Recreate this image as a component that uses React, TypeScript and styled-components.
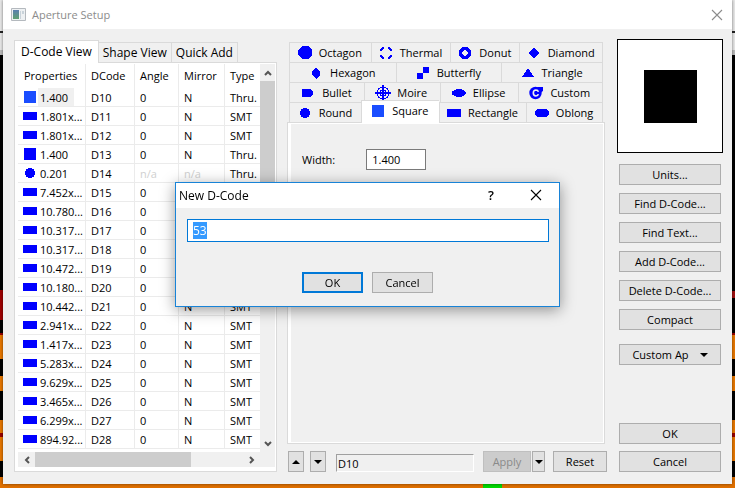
import React, { useEffect, useRef } from "react";
import styled, { createGlobalStyle, css } from "styled-components";

const BLUE = "#0000ff";
const BLUE_SELECTED = "#1a4dff";
const LINE = "#dadada";

const GlobalStyle = createGlobalStyle`
  * { box-sizing: border-box; }
  body { margin: 0; }
  body, button, input { font: 11px/15px "Open Sans", "Noto Sans", sans-serif; color: #000; }
`;

/* ---------- board behind the windows ---------- */

const Board = styled.div`
  min-height: 100vh;
  padding: 0 3px 4px;
  background:
    linear-gradient(#00d800, #00d800) 67.5% 100% / 19px 4px no-repeat,
    linear-gradient(#a00000, #a00000) 0 290px / 3px 30px no-repeat,
    linear-gradient(#a01010, #a01010) 100% 291px / 3px 7px no-repeat,
    linear-gradient(
      #e8e8e8 0 31px, #222 31px 33px, #e8e8e8 33px 50px, #bbb 50px 55px,
      #000 55px 333px, #900 333px 335px, #e87800 335px 359px,
      #000 359px 376px, #e87800 376px 391px, #000 391px 420px,
      #e87800 420px 433px, #900 433px 437px, #e87800 437px 461px,
      #000 461px 477px, #e07000 477px
    );
`;

const Window = styled.main`
  display: flex;
  flex-direction: column;
  min-height: calc(100vh - 4px);
  background: #f0f0f0;
  box-shadow: 0 0 3px rgba(0, 0, 0, 0.5);
`;

const TitleBar = styled.header`
  display: flex;
  align-items: center;
  gap: 6px;
  height: 29px;
  padding: 0 9px 0 8px;
  background: #fff;
  color: #8c8c8c;
`;

const TitleText = styled.h1`
  flex: 1;
  margin: 0;
  font: inherit;
`;

const CaptionButton = styled.button`
  display: flex;
  padding: 0;
  border: 0;
  background: none;
`;

const Body = styled.div`
  flex: 1;
  display: grid;
  grid-template-columns: 263px minmax(0, 1fr) 106px;
  column-gap: 10px;
  padding: 10px 9px 12px 11px;
`;

/* ---------- buttons ---------- */

const PushButton = styled.button<{ $default?: boolean; $width?: number }>`
  display: flex;
  align-items: center;
  justify-content: center;
  gap: 11px;
  height: 21px;
  padding: 0;
  ${(p) => p.$width && css`width: ${p.$width}px;`}
  border: ${(p) => (p.$default ? "2px solid #0078d7" : "1px solid #adadad")};
  background: #e1e1e1;
  white-space: nowrap;
  &:disabled {
    border-color: #bfbfbf;
    background: #ccc;
    color: #8a8a8a;
  }
`;

/* ---------- left column ---------- */

const Column = styled.section<{ $top: number }>`
  display: flex;
  flex-direction: column;
  min-width: 0;
  padding-top: ${(p) => p.$top}px;
`;

const ViewTabs = styled.div`
  display: flex;
  align-items: flex-end;
`;

const ViewTab = styled.button<{ $active?: boolean }>`
  height: ${(p) => (p.$active ? 23 : 20)}px;
  margin-bottom: ${(p) => (p.$active ? -1 : 0)}px;
  padding: 0 ${(p) => (p.$active ? 6 : 4)}px ${(p) => (p.$active ? 2 : 0)}px;
  border: 1px solid ${LINE};
  border-bottom: 0;
  & + & { border-left: 0; }
  background: ${(p) => (p.$active ? "#fff" : "#f0f0f0")};
  font-size: 12px;
  white-space: nowrap;
  position: relative;
`;

const ListPane = styled.div`
  flex: 1;
  display: grid;
  grid-template-columns: minmax(0, 1fr) 15px;
  grid-template-rows: auto 15px;
  align-content: start;
  padding: 1px 1px 2px 3px;
  border: 1px solid ${LINE};
  background: #fff;
`;

const CodeTable = styled.table`
  width: 100%;
  margin-bottom: 3px;
  table-layout: fixed;
  border-spacing: 0;
`;

const Col = styled.col<{ $w?: number }>`
  ${(p) => p.$w && css`width: ${p.$w}px;`}
`;

const cell = css`
  padding: 0 0 0 5px;
  overflow: hidden;
  white-space: nowrap;
  text-align: left;
  font-weight: normal;
  border-right: 1px solid #ebebeb;
  &:last-child { border-right: 0; }
`;

const HeadCell = styled.th`
  ${cell}
  height: 24px;
  padding-bottom: 1px;
  &:first-child { padding-left: 6px; }
`;

const Cell = styled.td<{ $muted?: boolean }>`
  ${cell}
  height: 19px;
  border-bottom: 1px solid #ebebeb;
  color: ${(p) => (p.$muted ? "#d0d0d0" : "#000")};
  &:first-child { padding-left: 4px; }
`;

const Property = styled.div`
  display: flex;
  align-items: center;
  height: 18px;
`;

const PropertyText = styled.span<{ $selected?: boolean }>`
  height: 18px;
  padding: 2px 6px 0 2px;
  background: ${(p) => (p.$selected ? "#f0f0f0" : "none")};
`;

const ScrollBar = styled.div<{ $vertical?: boolean }>`
  display: flex;
  flex-direction: ${(p) => (p.$vertical ? "column" : "row")};
  background: #f0f0f0;
`;

const ScrollArrow = styled.button`
  display: grid;
  place-items: center;
  flex: 0 0 17px;
  padding: 0;
  border: 0;
  background: none;
`;

const ScrollTrack = styled.div<{ $vertical?: boolean }>`
  flex: 1;
  display: flex;
  flex-direction: ${(p) => (p.$vertical ? "column" : "row")};
`;

const ScrollThumb = styled.div<{ $size: number }>`
  flex: 0 0 ${(p) => p.$size}%;
  background: #cdcdcd;
`;

const ScrollCorner = styled.div`
  background: #f0f0f0;
`;

/* ---------- centre column ---------- */

const ShapeRows = styled.div`
  padding: 0 4px 0 2px;
`;

const ShapeRow = styled.div`
  display: flex;
  height: 20px;
`;

const ShapeTab = styled.button<{ $share: number; $active?: boolean }>`
  flex: ${(p) => p.$share} 1 0;
  display: flex;
  align-items: center;
  justify-content: center;
  gap: 6px;
  padding: 0 2px 0 0;
  border: solid ${LINE};
  border-width: 1px 0 0 1px;
  &:last-child { border-right-width: 1px; }
  background: ${(p) => (p.$active ? "#fff" : "#f0f0f0")};
  ${(p) =>
    p.$active &&
    css`
      margin: -2px 0 -1px;
      padding-bottom: 3px;
      z-index: 1;
    `}
`;

const ShapePane = styled.div`
  flex: 1;
  margin-right: 2px;
  padding: 26px 12px;
  border: 1px solid ${LINE};
  box-shadow: inset 3px 1px #fff, inset -1px -1px #fff;
`;

const Field = styled.label`
  display: flex;
  align-items: center;
  gap: 31px;
  padding-left: 2px;
`;

const WidthInput = styled.input`
  width: 60px;
  height: 21px;
  padding: 0 5px;
  border: 1px solid #7a7a7a;
  background: #fff;
`;

const CommandRow = styled.div`
  display: flex;
  align-items: flex-end;
  gap: 6px;
  margin-top: 7px;
  padding-left: 1px;
`;

const StatusField = styled.input`
  flex: 1;
  min-width: 0;
  height: 18px;
  margin: 0 3px 0 4px;
  padding: 0 1px;
  border: 1px solid;
  border-color: #a0a0a0 #fff #fff #a0a0a0;
  background: #f0f0f0;
`;

const SplitButton = styled.div`
  display: flex;
  gap: 1px;
  margin-right: 2px;
`;

/* ---------- right column ---------- */

const Preview = styled.div`
  display: grid;
  place-items: center;
  height: 114px;
  border: 1px solid #000;
  background: #fff;
`;

const ButtonStack = styled.div`
  flex: 1;
  display: flex;
  flex-direction: column;
  gap: 8px;
  padding: 11px 2px 0;
`;

const MenuButton = styled(PushButton)`
  margin-top: 6px;
`;

const Confirm = styled.div`
  display: grid;
  gap: 7px;
  margin-top: auto;
`;

/* ---------- modal ---------- */

const Overlay = styled.div`
  position: fixed;
  inset: 0;
  z-index: 5;
  display: grid;
  place-items: center;
`;

const Dialog = styled.form`
  width: 385px;
  max-width: 100%;
  border: 1px solid #1883d7;
  background: #f0f0f0;
  box-shadow: 0 3px 14px rgba(0, 0, 0, 0.4);
`;

const DialogBar = styled.header`
  display: flex;
  align-items: center;
  height: 25px;
  padding: 0 17px 0 3px;
  background: #fff;
  font-size: 12px;
`;

const DialogTitle = styled.h2`
  flex: 1;
  margin: 0;
  font: inherit;
`;

const HelpButton = styled(CaptionButton)`
  margin-right: 36px;
  font-size: 13px;
  font-weight: 600;
`;

const CodeInput = styled.input`
  display: block;
  width: calc(100% - 21px);
  height: 23px;
  margin: 11px 10px 0 11px;
  padding: 0 5px;
  border: 1px solid #0078d7;
  outline: 0;
  background: #fff;
  font-size: 12px;
  &::selection { background: rgba(51, 153, 255, 0.99); color: #fff; }
`;

const DialogActions = styled.div`
  display: flex;
  justify-content: center;
  gap: 9px;
  padding: 30px 0 13px;
`;

/* ---------- drawings ---------- */

const Glyph = styled.svg`
  display: block;
  flex: none;
`;

type ShapeName =
  | "octagon" | "thermal" | "donut" | "diamond" | "hexagon" | "butterfly"
  | "triangle" | "bullet" | "moire" | "ellipse" | "custom" | "round"
  | "square" | "rect" | "oblong";

const shapes: Record<ShapeName, React.ReactNode> = {
  octagon: <path d="M5 1h6l4 4v5l-4 4H5l-4-4V5z" />,
  thermal: (
    <g fill="none" stroke={BLUE} strokeWidth="2">
      <path d="M6 3H5L3 5v1M10 3h1l2 2v1M3 10v1l2 2h1M13 10v1l-2 2h-1" />
    </g>
  ),
  donut: <circle cx="8" cy="8" r="4.5" fill="none" stroke={BLUE} strokeWidth="3.4" />,
  diamond: <path d="M8 2.500L13.500 8 8 13.500 2.500 8z" />,
  hexagon: <path d="M8 3l4 3v4l-4 4-4-4V6z" />,
  butterfly: <path d="M8 2h6v6H8zM2 8h6v6H2z" />,
  triangle: <path d="M8 3l6 9H2z" />,
  bullet: <path d="M2 4h8l3 2v4l-3 2H2z" />,
  moire: (
    <g fill="none" stroke={BLUE}>
      <circle cx="8" cy="8" r="6" />
      <circle cx="8" cy="8" r="3" />
      <path strokeWidth="2" d="M8 0v16M0 8h16" />
    </g>
  ),
  ellipse: <ellipse cx="8" cy="8" rx="7" ry="4" />,
  custom: (
    <g>
      <circle cx="7.500" cy="8" r="6.200" />
      <path d="M9 2h6v4l-3 2z" />
      <path d="M10.300 6.800Q10 5 8 5 5.300 5.200 5.300 8T8 11q2 0 2.300-1.800" fill="none" stroke="#f0f0f0" strokeWidth="1.600" />
    </g>
  ),
  round: <circle cx="8" cy="8" r="5" />,
  square: <path d="M2 2h12v12H2z" />,
  rect: <path d="M1 4h14v8H1z" />,
  oblong: <path d="M4 4h8l3 2v4l-3 2H4l-3-2V6z" />,
};

const Shape = ({ name, selected }: { name: ShapeName; selected?: boolean }) => (
  <Glyph width="16" height="16" viewBox="0 0 16 16" fill={selected ? BLUE_SELECTED : BLUE}
    shapeRendering={name === "custom" ? "auto" : "crispEdges"} aria-hidden>
    {shapes[name]}
  </Glyph>
);

const Cross = ({ color }: { color: string }) => (
  <Glyph width="12" height="12" viewBox="0 0 12 12" aria-hidden>
    <path d="M1 1l10 10M11 1L1 11" stroke={color} strokeWidth="1.100" />
  </Glyph>
);

const Caret = ({ up }: { up?: boolean }) => (
  <Glyph width="8" height="4" viewBox="0 0 8 4" aria-hidden>
    <path d={up ? "M0 4h8L4 0z" : "M0 0h8L4 4z"} />
  </Glyph>
);

const chevrons = {
  up: "M1 6l3-3 3 3",
  down: "M1 2l3 3 3-3",
  left: "M6 1L3 4l3 3",
  right: "M2 1l3 3-3 3",
};

const Chevron = ({ dir }: { dir: keyof typeof chevrons }) => (
  <Glyph width="8" height="8" viewBox="0 0 8 8" aria-hidden>
    <path d={chevrons[dir]} fill="none" stroke="#555" strokeWidth="2" />
  </Glyph>
);

const AppIcon = () => (
  <Glyph width="15" height="13" viewBox="0 0 15 13" aria-hidden>
    <defs>
      <linearGradient id="app" x2="0" y2="1">
        <stop stopColor="#5a7fb0" />
        <stop offset="1" stopColor="#5fa070" />
      </linearGradient>
    </defs>
    <path d="M.5.5h14v12H.5z" fill="#eef1f3" stroke="#b4b9be" />
    <path d="M2 2h6v9H2z" fill="url(#app)" />
    <path d="M9 3h1v8H9zM11 3h2v3h-2z" fill="#c9d3da" />
  </Glyph>
);

/* ---------- data ---------- */

const codes: { shape: ShapeName; size: string; type: string; round?: boolean }[] = [
  { shape: "square", size: "1.400", type: "Thru." },
  { shape: "rect", size: "1.801x...", type: "SMT" },
  { shape: "rect", size: "1.801x...", type: "SMT" },
  { shape: "square", size: "1.400", type: "Thru." },
  { shape: "round", size: "0.201", type: "Thru.", round: true },
  ...[
    "7.452x...", "10.780...", "10.317...", "10.317...", "10.472...", "10.180...", "10.442...",
    "2.941x...", "1.417x...", "5.283x...", "9.629x...", "3.465x...", "6.299x...", "894.92...",
  ].map((size) => ({ shape: "rect" as ShapeName, size, type: "SMT" })),
];

const shapeRows: [string, ShapeName, number][][] = [
  [["Octagon", "octagon", 82], ["Thermal", "thermal", 80], ["Donut", "donut", 69], ["Diamond", "diamond", 83]],
  [["Hexagon", "hexagon", 107], ["Butterfly", "butterfly", 106], ["Triangle", "triangle", 101]],
  [["Bullet", "bullet", 75], ["Moire", "moire", 76], ["Ellipse", "ellipse", 78], ["Custom", "custom", 85]],
  [["Round", "round", 72], ["Square", "square", 78], ["Rectangle", "rect", 88], ["Oblong", "oblong", 76]],
];

const commands = ["Units...", "Find D-Code...", "Find Text...", "Add D-Code...", "Delete D-Code...", "Compact"];

/* ---------- page ---------- */

const CodeList = () => (
  <Column $top={1}>
    <ViewTabs role="tablist">
      <ViewTab role="tab" aria-selected $active>D-Code View</ViewTab>
      <ViewTab role="tab" aria-selected={false}>Shape View</ViewTab>
      <ViewTab role="tab" aria-selected={false}>Quick Add</ViewTab>
    </ViewTabs>
    <ListPane>
      <CodeTable>
        <colgroup>
          <Col $w={68} /><Col $w={49} /><Col $w={44} /><Col $w={46} /><Col />
        </colgroup>
        <thead>
          <tr>
            {["Properties", "DCode", "Angle", "Mirror", "Type"].map((h) => (
              <HeadCell key={h} scope="col">{h}</HeadCell>
            ))}
          </tr>
        </thead>
        <tbody>
          {codes.map((c, i) => (
            <tr key={i}>
              <Cell>
                <Property>
                  <Shape name={c.shape} selected={i === 0} />
                  <PropertyText $selected={i === 0}>{c.size}</PropertyText>
                </Property>
              </Cell>
              <Cell>D{10 + i}</Cell>
              <Cell $muted={c.round}>{c.round ? "n/a" : "0"}</Cell>
              <Cell $muted={c.round}>{c.round ? "n/a" : "N"}</Cell>
              <Cell>{c.type}</Cell>
            </tr>
          ))}
        </tbody>
      </CodeTable>
      <ScrollBar $vertical>
        <ScrollArrow aria-label="Scroll up"><Chevron dir="up" /></ScrollArrow>
        <ScrollTrack $vertical><ScrollThumb $size={50} /></ScrollTrack>
        <ScrollArrow aria-label="Scroll down"><Chevron dir="down" /></ScrollArrow>
      </ScrollBar>
      <ScrollBar>
        <ScrollArrow aria-label="Scroll left"><Chevron dir="left" /></ScrollArrow>
        <ScrollTrack><ScrollThumb $size={75} /></ScrollTrack>
        <ScrollArrow aria-label="Scroll right"><Chevron dir="right" /></ScrollArrow>
      </ScrollBar>
      <ScrollCorner />
    </ListPane>
  </Column>
);

const ShapeEditor = () => (
  <Column $top={3}>
    <ShapeRows role="tablist">
      {shapeRows.map((row, i) => (
        <ShapeRow key={i}>
          {row.map(([label, icon, share]) => (
            <ShapeTab key={label} role="tab" $share={share} $active={label === "Square"} aria-selected={label === "Square"}>
              <Shape name={icon} selected={label === "Square"} />
              {label}
            </ShapeTab>
          ))}
        </ShapeRow>
      ))}
    </ShapeRows>
    <ShapePane>
      <Field>
        Width:
        <WidthInput defaultValue="1.400" />
      </Field>
    </ShapePane>
    <CommandRow>
      <PushButton $width={16} aria-label="Previous"><Caret up /></PushButton>
      <PushButton $width={16} aria-label="Next"><Caret /></PushButton>
      <StatusField readOnly value="D10" aria-label="Current D-Code" />
      <SplitButton>
        <PushButton $width={48} disabled>Apply</PushButton>
        <PushButton $width={13} aria-label="Apply options"><Caret /></PushButton>
      </SplitButton>
      <PushButton $width={54}>Reset</PushButton>
    </CommandRow>
  </Column>
);

const Commands = () => (
  <Column $top={0}>
    <Preview>
      <Glyph width="53" height="53" viewBox="0 0 53 53" role="img" aria-label="Square aperture">
        <path d="M0 0h53v53H0z" />
      </Glyph>
    </Preview>
    <ButtonStack>
      {commands.map((c) => (
        <PushButton key={c}>{c}</PushButton>
      ))}
      <MenuButton>Custom Ap <Caret /></MenuButton>
      <Confirm>
        <PushButton>OK</PushButton>
        <PushButton>Cancel</PushButton>
      </Confirm>
    </ButtonStack>
  </Column>
);

const NewCodeDialog = () => {
  const input = useRef<HTMLInputElement>(null);
  useEffect(() => {
    input.current?.focus();
    input.current?.select();
  }, []);
  return (
    <Overlay>
      <Dialog role="dialog" aria-labelledby="new-code" onSubmit={(e) => e.preventDefault()}>
        <DialogBar>
          <DialogTitle id="new-code">New D-Code</DialogTitle>
          <HelpButton type="button">?</HelpButton>
          <CaptionButton type="button" aria-label="Close"><Cross color="#000" /></CaptionButton>
        </DialogBar>
        <CodeInput ref={input} defaultValue="53" aria-labelledby="new-code" />
        <DialogActions>
          <PushButton $default $width={61}>OK</PushButton>
          <PushButton type="button" $width={61}>Cancel</PushButton>
        </DialogActions>
      </Dialog>
    </Overlay>
  );
};

export default function App() {
  return (
    <Board>
      <GlobalStyle />
      <Window>
        <TitleBar>
          <AppIcon />
          <TitleText>Aperture Setup</TitleText>
          <CaptionButton aria-label="Close window"><Cross color="#8c8c8c" /></CaptionButton>
        </TitleBar>
        <Body>
          <CodeList />
          <ShapeEditor />
          <Commands />
        </Body>
      </Window>
      <NewCodeDialog />
    </Board>
  );
}
